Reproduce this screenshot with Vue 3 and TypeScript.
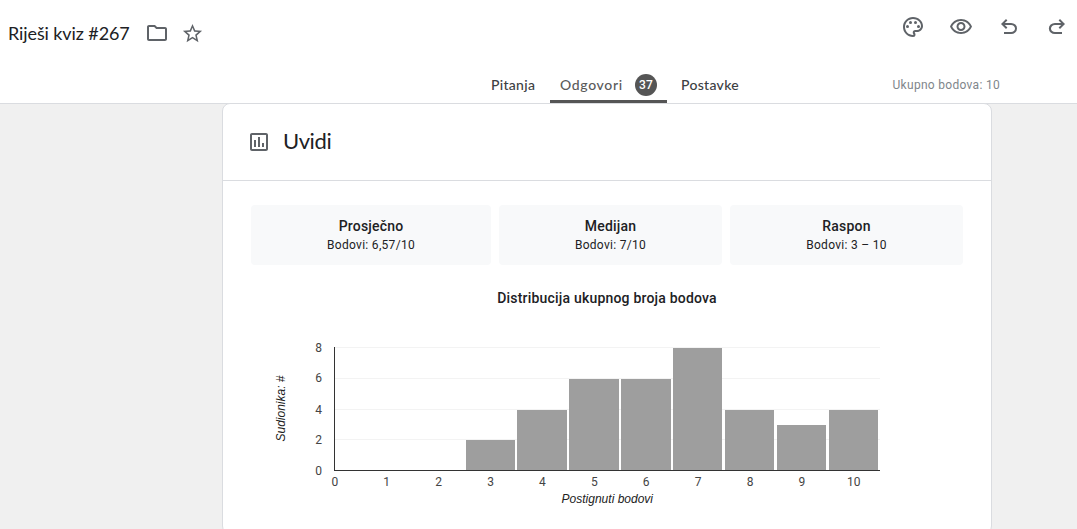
<script setup lang="ts">
interface Stat {
  label: string
  value: string
}

const stats: Stat[] = [
  { label: 'Prosječno', value: 'Bodovi: 6,57/10' },
  { label: 'Medijan', value: 'Bodovi: 7/10' },
  { label: 'Raspon', value: 'Bodovi: 3 – 10' },
]

// Plot geometry in the coordinate space of the chart's SVG
const left = 111
const baseline = 366
const ticks = [
  { value: 0, y: 366 },
  { value: 2, y: 335 },
  { value: 4, y: 305 },
  { value: 6, y: 274 },
  { value: 8, y: 243 },
]
const bars = [
  { x: 243, width: 49, top: 336 },
  { x: 294, width: 50, top: 306 },
  { x: 346, width: 50, top: 275 },
  { x: 398, width: 50, top: 275 },
  { x: 450, width: 49, top: 244 },
  { x: 502, width: 49, top: 306 },
  { x: 554, width: 49, top: 321 },
  { x: 606, width: 49, top: 306 },
]
const scores = Array.from({ length: 11 }, (_, i) => i)
const originY = 180
</script>

<template>
  <div class="page">
    <header class="header">
      <div class="topbar">
        <h1 class="doc-title"><span class="doc-name">Riješi kviz #267</span></h1>
        <svg class="icon" viewBox="0 0 24 24"><path d="M9.17 6l2 2H20v10H4V6h5.17M10 4H4c-1.1 0-1.99.9-1.99 2L2 18c0 1.1.9 2 2 2h16c1.1 0 2-.9 2-2V8c0-1.1-.9-2-2-2h-8l-2-2z" /></svg>
        <svg class="icon star" viewBox="0 0 24 24"><path d="M22 9.24l-7.19-.62L12 2 9.19 8.63 2 9.24l5.46 4.73L5.82 21 12 17.27 18.18 21l-1.63-7.03L22 9.24zM12 15.4l-3.76 2.27 1-4.28-3.32-2.88 4.38-.38L12 6.1l1.71 4.04 4.38.38-3.32 2.88 1 4.28L12 15.4z" /></svg>
        <div class="actions">
          <svg class="icon" viewBox="0 0 24 24">
            <path d="M12 22C6.49 22 2 17.51 2 12S6.49 2 12 2s10 4.04 10 9c0 3.31-2.69 6-6 6h-1.77c-.28 0-.5.22-.5.5 0 .12.05.23.13.33.41.47.64 1.06.64 1.67A2.5 2.5 0 0 1 12 22zm0-18c-4.41 0-8 3.59-8 8s3.59 8 8 8c.28 0 .5-.22.5-.5a.54.54 0 0 0-.14-.35c-.41-.46-.63-1.05-.63-1.65a2.5 2.5 0 0 1 2.5-2.5H16c2.21 0 4-1.79 4-4 0-3.86-3.59-7-8-7z" />
            <circle cx="6.5" cy="11.5" r="1.5" /><circle cx="9.5" cy="7.5" r="1.5" />
            <circle cx="14.5" cy="7.5" r="1.5" /><circle cx="17.5" cy="11.5" r="1.5" />
          </svg>
          <svg class="icon" viewBox="0 0 24 24"><path d="M12 6c3.79 0 7.17 2.13 8.82 5.5C19.17 14.87 15.79 17 12 17s-7.17-2.13-8.82-5.5C4.83 8.13 8.21 6 12 6m0-2C7 4 2.73 7.11 1 11.5 2.73 15.89 7 19 12 19s9.27-3.11 11-7.5C21.27 7.11 17 4 12 4zm0 5c1.38 0 2.5 1.12 2.5 2.5S13.38 14 12 14s-2.5-1.12-2.5-2.5S10.62 9 12 9m0-2c-2.48 0-4.5 2.02-4.5 4.5S9.52 16 12 16s4.5-2.02 4.5-4.5S14.48 7 12 7z" /></svg>
          <svg class="icon" viewBox="0 -960 960 960"><path d="M280-200v-80h284q63 0 109.5-40T720-420q0-60-46.5-100T564-560H312l104 104-56 56-200-200 200-200 56 56-104 104h252q97 0 169.5 63T800-420q0 94-72.5 157T564-200H280Z" /></svg>
          <svg class="icon" viewBox="0 -960 960 960"><path d="M396-200q-97 0-169.5-63T154-420q0-94 72.5-157T396-640h252L544-744l56-56 200 200-200 200-56-56 104-104H396q-63 0-109.5 40T240-420q0 60 46.5 100T396-280h284v80H396Z" /></svg>
        </div>
      </div>
      <div class="tabrow">
        <nav class="tabs">
          <a class="tab"><span class="tab-text first">Pitanja</span></a>
          <a class="tab active"><span class="tab-text mid">Odgovori</span><span class="badge">37</span></a>
          <a class="tab"><span class="tab-text last">Postavke</span></a>
        </nav>
        <span class="total">Ukupno bodova: 10</span>
      </div>
    </header>

    <main class="card">
      <div class="card-head">
        <svg class="insight" viewBox="0 0 24 24"><path d="M19 3H5c-1.1 0-2 .9-2 2v14c0 1.1.9 2 2 2h14c1.1 0 2-.9 2-2V5c0-1.1-.9-2-2-2zm0 16H5V5h14v14zM7 10h2v7H7zm4-3h2v10h-2zm4 6h2v4h-2z" /></svg>
        <h2 class="card-title">Uvidi</h2>
      </div>
      <section class="stats">
        <div v-for="s in stats" :key="s.label" class="stat">
          <div class="stat-label">{{ s.label }}</div>
          <div class="stat-value">{{ s.value }}</div>
        </div>
      </section>
      <svg class="chart" width="768" height="246" :viewBox="`0 ${originY} 768 246`">
        <text class="chart-title" x="384" y="199" text-anchor="middle">Distribucija ukupnog broja bodova</text>
        <rect v-for="t in ticks.slice(1)" :key="'g' + t.value" class="grid" :x="left" :y="t.y" width="546" height="1" />
        <rect v-for="(b, i) in bars" :key="'b' + i" class="bar" :x="b.x" :y="b.top" :width="b.width" :height="baseline - b.top" />
        <rect class="axis" :x="left" y="243" width="1" height="124" />
        <rect class="axis" :x="left" :y="baseline" width="546" height="1" />
        <text v-for="t in ticks" :key="'t' + t.value" class="tick" x="99" :y="t.y + (t.value === 6 ? 4 : 5)" text-anchor="end">{{ t.value }}</text>
        <text v-for="n in scores" :key="'n' + n" class="tick" :x="111.8 + n * 51.9" y="382" text-anchor="middle">{{ n }}</text>
        <text class="axis-title" x="384.3" y="399" text-anchor="middle">Postignuti bodovi</text>
        <text class="axis-title" transform="translate(62 304.5) rotate(-90)" text-anchor="middle" textLength="66">Sudionika: #</text>
      </svg>
    </main>
  </div>
</template>

<style>
body {
  margin: 0;
  background: #f0f0f0;
  overflow: hidden;
}
</style>

<style scoped>
.page {
  height: 529px;
  overflow: hidden;
  background: #f0f0f0;
  font-family: Roboto, "Liberation Sans", sans-serif;
  color: #202124;
}
.header {
  box-sizing: border-box;
  height: 104px;
  background: #fff;
  border-bottom: 1px solid #dadce0;
}
.topbar {
  display: flex;
  align-items: center;
  height: 66px;
  padding-left: 8px;
  padding-right: 8px;
}
.doc-title {
  width: 137px;
  margin: 0;
  padding-bottom: 1px;
  font: 400 18px/24px Lato, sans-serif;
  white-space: nowrap;
}
.doc-name {
  letter-spacing: -0.1px;
}
.icon {
  width: 24px;
  height: 24px;
  fill: #5f6368;
}
.topbar > .icon.star {
  width: 23px;
  height: 23px;
  margin-left: 12px;
}
.actions {
  display: flex;
  gap: 24px;
  margin-left: auto;
  padding-bottom: 12px;
}
.tabrow {
  display: flex;
  height: 37px;
}
.tabs {
  display: flex;
  margin-left: 481px;
}
.tab {
  box-sizing: border-box;
  display: flex;
  align-items: center;
  height: 37px;
  padding: 0 10px;
  font: 500 14px/20px Lato, sans-serif;
  letter-spacing: 0.3px;
  white-space: nowrap;
  color: #3c4043;
}
.tab.active {
  width: 117px;
  margin: 0 4px 0 5px;
  color: #5a5a5a;
  background: linear-gradient(#555, #555) bottom / 100% 3px no-repeat;
}
.tab-text.first { width: 44px; }
.tab-text.mid {
  width: 75px;
  letter-spacing: 0.65px;
}
.tab-text.last { width: 58px; }
.badge {
  flex: none;
  width: 22px;
  height: 22px;
  border-radius: 50%;
  background: #555;
  color: #fff;
  font: 500 12px/22px Roboto, sans-serif;
  text-align: center;
}
.total {
  margin-left: auto;
  margin-right: 77px;
  color: #80868b;
  font-size: 12px;
  line-height: 39px;
  letter-spacing: 0.3px;
}
.card {
  box-sizing: border-box;
  width: 770px;
  height: 431px;
  margin: -1px 0 0 222px;
  background: #fff;
  border: 1px solid #dadce0;
  border-radius: 8px;
}
.card-head {
  box-sizing: border-box;
  display: flex;
  align-items: center;
  height: 77px;
  padding: 0 0 1px 24px;
  border-bottom: 1px solid #dadce0;
}
.insight {
  width: 24px;
  height: 24px;
  fill: #5f6368;
}
.card-title {
  margin: 0 0 0 12px;
  padding-bottom: 1px;
  font: 400 22px/28px Lato, sans-serif;
  letter-spacing: -0.4px;
}
.stats {
  display: grid;
  grid-template-columns: 240px 223px 233px;
  gap: 8px;
  padding: 24px 28px 0;
}
.stat {
  box-sizing: border-box;
  height: 60px;
  padding-top: 11px;
  border-radius: 4px;
  background: #f8f9fa;
  text-align: center;
}
.stat-label {
  font-size: 14px;
  font-weight: 500;
  line-height: 20px;
  letter-spacing: 0.2px;
}
.stat-value {
  font-size: 12px;
  line-height: 18px;
  letter-spacing: 0.3px;
}
.chart {
  display: block;
  margin-top: 19px;
}
.chart-title {
  font-size: 14px;
  font-weight: 500;
  letter-spacing: 0.2px;
  fill: #202124;
}
.grid { fill: #f3f3f3; }
.bar { fill: #9e9e9e; }
.axis { fill: #333; }
.tick {
  font-size: 12px;
  fill: #444;
}
.axis-title {
  font: italic 12px "Liberation Sans", sans-serif;
  fill: #222;
}
</style>
